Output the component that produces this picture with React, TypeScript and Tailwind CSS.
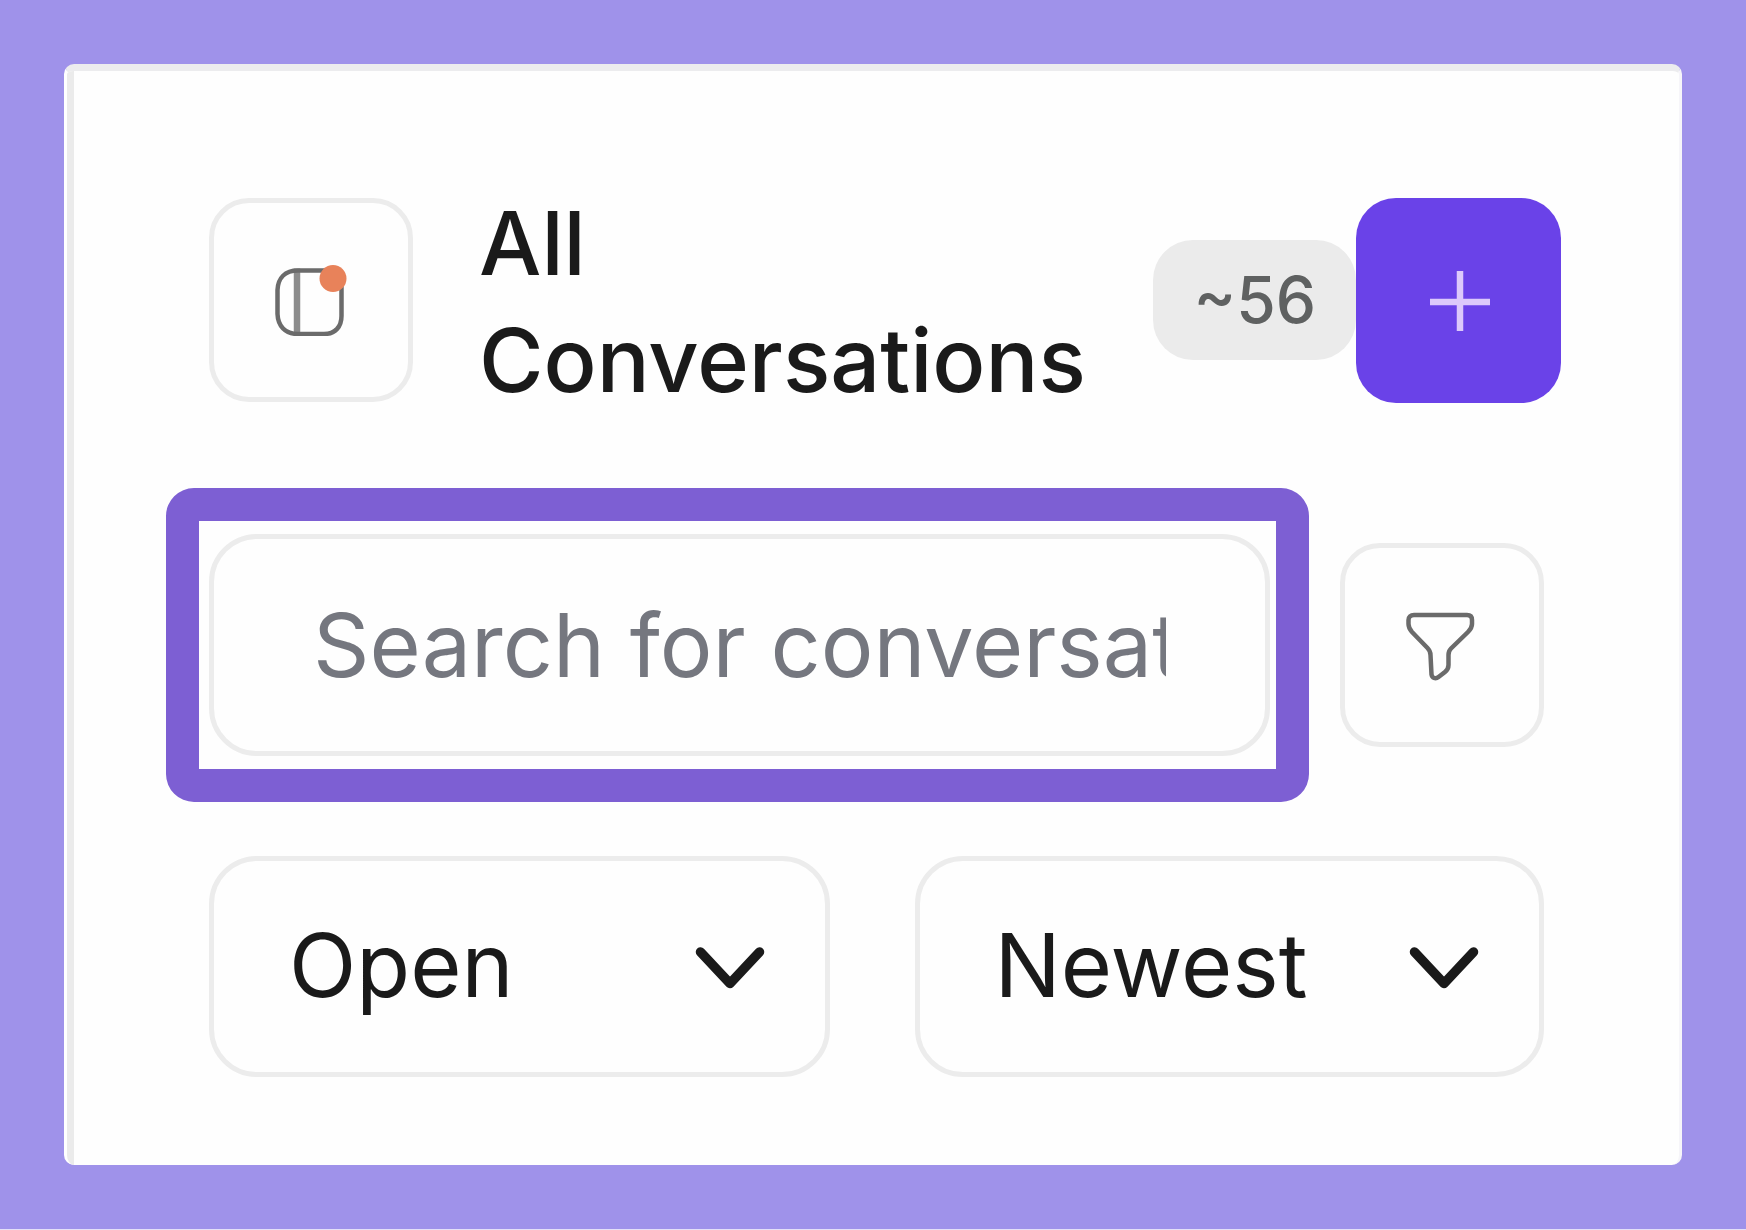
import { useState } from "react";

interface Option {
    value: string;
    label: string;
}

const statusOptions: Option[] = [
    { value: "open", label: "Open" },
    { value: "resolved", label: "Resolved" },
    { value: "pending", label: "Pending" },
];

const sortOptions: Option[] = [
    { value: "newest", label: "Newest" },
    { value: "oldest", label: "Oldest" },
];

function SidebarIcon() {
    return (
        <svg className="w-[72px] h-[72px]" viewBox="0 0 72 72" fill="none" aria-hidden="true">
            <path d="M22 4.500V70" stroke="#8c8c8c" strokeWidth="6.500" />
            <path
                d="M23 6.500H49C60 6.500 66.500 13 66.500 24V52C66.500 63 60 70 49 70H23C10 70 3 62 2.500 50V26C3 14 10 6.500 23 6.500Z"
                stroke="#6b6b6b"
                strokeWidth="4.500"
            />
            <circle cx="58" cy="14.500" r="13.500" fill="#e8825a" />
        </svg>
    );
}

function PlusIcon() {
    return (
        <svg className="w-[72px] h-[72px]" viewBox="0 0 72 72" fill="none" aria-hidden="true">
            <path d="M37 7v60M7 38h60" stroke="#dcc9fb" strokeWidth="6.500" />
        </svg>
    );
}

function FilterIcon() {
    return (
        <svg className="w-[72px] h-[72px]" viewBox="0 0 72 72" fill="none" aria-hidden="true">
            <path
                d="M8 6H61C64.500 6 66 8 66 11V15C66 18 64.500 20.500 62 23L45 39.500C43 41.500 42.500 43 42.500 46V56C42.500 59 41.500 61 39 63L32.500 68C29.500 70.500 26 69 25.500 65.500L24.500 46C24.500 42.500 23.500 41 21.500 39L6 23C3.800 20.500 2.500 18 2.500 15V11C2.500 8 4.500 6 8 6Z"
                stroke="#6b6b6b"
                strokeWidth="4.500"
                strokeLinejoin="round"
            />
        </svg>
    );
}

function ChevronIcon() {
    return (
        <svg className="w-[72px] h-[72px]" viewBox="0 0 72 72" fill="none" aria-hidden="true">
            <path
                d="M6.500 21L36 52.500L65.500 21"
                stroke="#1a1a1a"
                strokeWidth="9.500"
                strokeLinecap="round"
                strokeLinejoin="round"
            />
        </svg>
    );
}

function SelectBox({ label, options }: { label: string; options: Option[] }) {
    const [value, setValue] = useState(options[0].value);

    return (
        <div className="relative min-w-0">
            <select
                aria-label={label}
                value={value}
                onChange={(e) => setValue(e.target.value)}
                className="w-full h-[221px] pl-[75px] pr-36 pb-1 appearance-none bg-transparent border-[5px] border-[#ececec] rounded-[48px] text-[88px] text-[#1a1a1a] outline-none cursor-pointer"
            >
                {options.map((o) => (
                    <option key={o.value} value={o.value}>
                        {o.label}
                    </option>
                ))}
            </select>
            <span className="absolute inset-y-0 right-16 flex items-center pointer-events-none">
                <ChevronIcon />
            </span>
        </div>
    );
}

export default function App() {
    const [search, setSearch] = useState("");

    return (
        <div className="flex min-h-screen p-16 bg-[#9f92ea] font-['Inter',sans-serif] border-b border-[#e4e0f8]">
            <main className="flex flex-1 min-w-0 bg-[#fefefe] rounded-[10px] overflow-hidden border-t-[7px] border-t-[#ececee] border-l-[3px] border-l-white border-r-[3px] border-r-[#f6f5f9]">
                <div className="flex-1 min-w-0 pt-[110px] pb-[88px] border-l-[7px] border-[#ebebeb]">
                    {/* Tiêu đề */}
                    <header className="flex items-center pl-[135px] pr-[118px]">
                        <button
                            type="button"
                            aria-label="Toggle sidebar"
                            className="flex shrink-0 items-center justify-center size-[204px] border-[5px] border-[#ececec] rounded-[40px] cursor-pointer"
                        >
                            <SidebarIcon />
                        </button>
                        <h1 className="flex-1 min-w-0 ml-[66px] pt-1 text-[88px] leading-[117px] font-medium text-[#1a1a1a]">
                            All Conversations
                        </h1>
                        <span className="px-10 rounded-[40px] bg-[#ebebeb] text-[64px] leading-[120px] font-medium text-[#5f6161]">
                            ~56
                        </span>
                        <button
                            type="button"
                            aria-label="New conversation"
                            className="flex shrink-0 items-center justify-center size-[205px] rounded-[40px] bg-[#6a42e8] cursor-pointer"
                        >
                            <PlusIcon />
                        </button>
                    </header>

                    {/* Tìm kiếm */}
                    <div className="flex items-center gap-[31px] mt-[69px] pl-[92px] pr-[135px]">
                        <div className="flex flex-1 min-w-0 py-[13px] pl-[10px] pr-[6px] border-[33px] border-[#7d5fd3] rounded-[28px]">
                            <input
                                type="text"
                                aria-label="Search for conversations"
                                value={search}
                                onChange={(e) => setSearch(e.target.value)}
                                placeholder="Search for conversations"
                                className="w-full min-w-0 h-[222px] px-[99px] border-[5px] border-[#ececec] rounded-[48px] text-[88px] text-[#1a1a1a] placeholder:text-[#75777f] outline-none"
                            />
                        </div>
                        <button
                            type="button"
                            aria-label="Filter"
                            className="flex shrink-0 items-center justify-center size-[204px] border-[5px] border-[#ececec] rounded-[40px] cursor-pointer"
                        >
                            <FilterIcon />
                        </button>
                    </div>

                    {/* Trạng thái và sắp xếp */}
                    <div className="grid grid-cols-[69fr_70fr] gap-[85px] mt-[54px] pl-[135px] pr-[135px]">
                        <SelectBox label="Status" options={statusOptions} />
                        <SelectBox label="Sort" options={sortOptions} />
                    </div>
                </div>
            </main>
        </div>
    );
}
